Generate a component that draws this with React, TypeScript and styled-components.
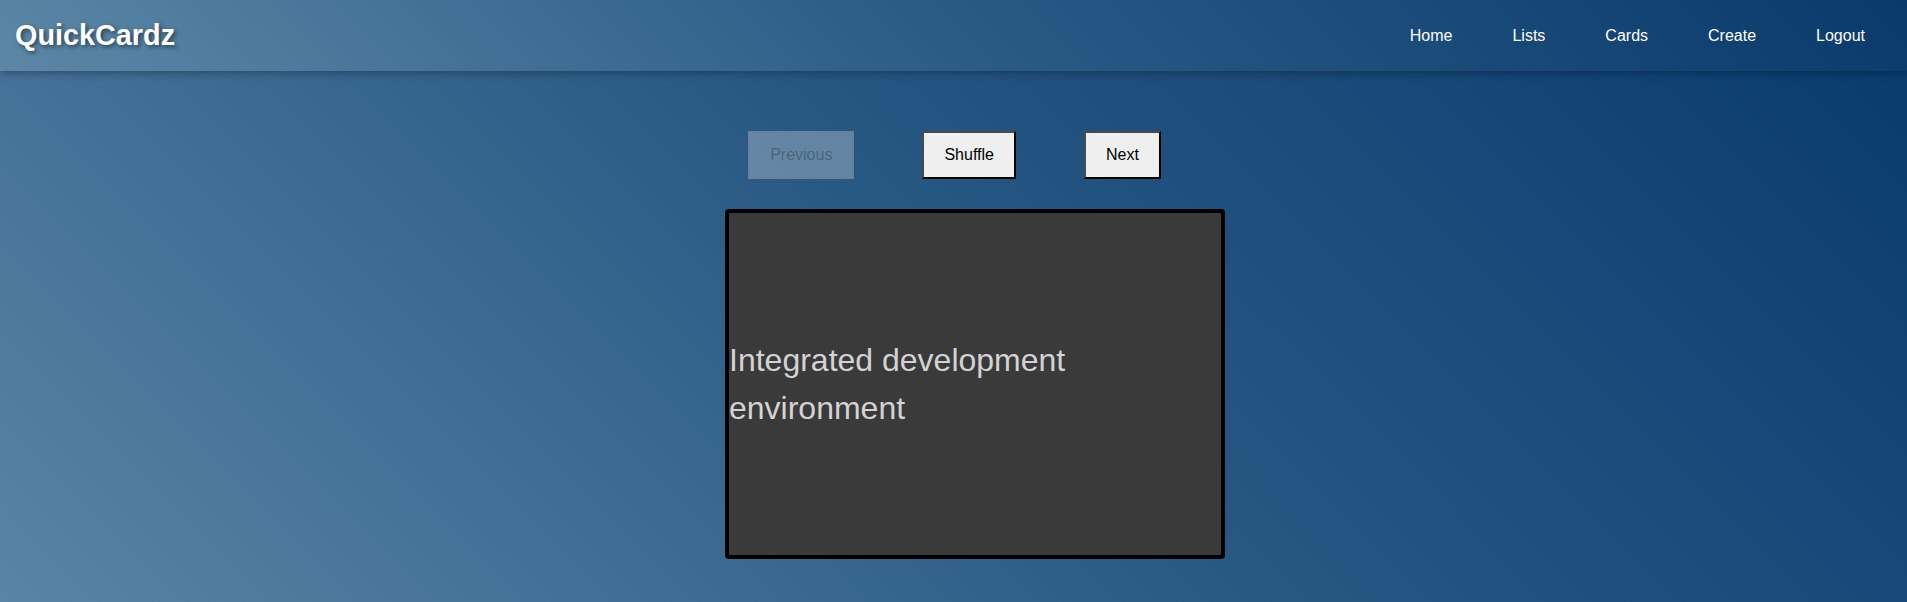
import React, { useState } from "react";
import styled, { createGlobalStyle } from "styled-components";

const GlobalStyle = createGlobalStyle`
  html, body {
    margin: 0;
    padding: 0;
  }
  body {
    font-family: "Liberation Sans", Arial, sans-serif;
  }
`;

const gradient = "linear-gradient(45deg, #5984a5 0%, #285884 50%, #083a6b 100%)";

const Page = styled.div`
  min-height: 100vh;
  background: ${gradient};
`;

const Header = styled.header`
  display: flex;
  align-items: center;
  justify-content: space-between;
  height: 71px;
  padding: 0 12px 0 15px;
  background: linear-gradient(45deg, #5c87a6 0%, #2a5a86 50%, #093a6a 100%);
  box-shadow: 0 2px 8px rgba(0, 0, 0, 0.3);
  position: relative;
`;

const Logo = styled.h1`
  margin: 0;
  font-size: 28.8px;
  font-weight: bold;
  color: #fff;
  text-shadow: 2px 2px 4px rgba(0, 0, 0, 0.5);
`;

const Nav = styled.nav`
  display: flex;
  align-items: center;
`;

const NavLink = styled.a`
  padding: 8px 30px;
  font-size: 16px;
  color: #fff;
  text-decoration: none;
  cursor: pointer;
`;

const Main = styled.main`
  display: flex;
  flex-direction: column;
  align-items: center;
  padding-top: 60px;
`;

const ButtonRow = styled.div`
  display: flex;
  gap: 68px;
  margin-left: 2px;
`;

const ControlButton = styled.button`
  font-family: "Liberation Sans", Arial, sans-serif;
  font-size: 16px;
  padding: 13px 20px;
  background: #efefef;
  color: #000;
  border: 2px solid;
  border-color: #4a4a4a #000 #000 #4a4a4a;
  cursor: pointer;

  &:disabled {
    background: rgba(239, 239, 239, 0.3);
    color: rgba(16, 16, 16, 0.3);
    border-color: rgba(118, 118, 118, 0.3);
    cursor: default;
  }
`;

const Card = styled.div`
  box-sizing: border-box;
  width: 500px;
  height: 350px;
  margin: 30px 0 0 43px;
  display: flex;
  align-items: center;
  background: #3a3a3a;
  border: 4px solid #000;
  border-radius: 4px;
  cursor: pointer;
`;

const CardText = styled.p`
  margin: 0;
  font-size: 32px;
  line-height: 1.5;
  color: #d3d3d3;
`;

const cards = [
  { front: "IDE", back: "Integrated development environment" },
  { front: "API", back: "Application programming interface" },
];

export default function App() {
  const [index, setIndex] = useState(0);
  const [flipped, setFlipped] = useState(true);
  const card = cards[index];

  return (
    <Page>
      <GlobalStyle />
      <Header>
        <Logo>QuickCardz</Logo>
        <Nav>
          <NavLink>Home</NavLink>
          <NavLink>Lists</NavLink>
          <NavLink>Cards</NavLink>
          <NavLink>Create</NavLink>
          <NavLink>Logout</NavLink>
        </Nav>
      </Header>
      <Main>
        <ButtonRow>
          <ControlButton disabled={index === 0} onClick={() => setIndex(index - 1)}>
            Previous
          </ControlButton>
          <ControlButton>Shuffle</ControlButton>
          <ControlButton onClick={() => setIndex((index + 1) % cards.length)}>
            Next
          </ControlButton>
        </ButtonRow>
        <Card onClick={() => setFlipped(!flipped)}>
          <CardText>{flipped ? card.back : card.front}</CardText>
        </Card>
      </Main>
    </Page>
  );
}
